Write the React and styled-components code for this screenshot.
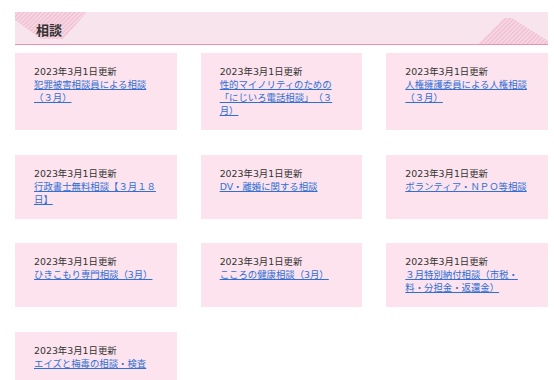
import React from 'react';
import styled, { createGlobalStyle } from 'styled-components';

const items = [
  { date: '2023年3月1日更新', title: '犯罪被害相談員による相談（３月）' },
  { date: '2023年3月1日更新', title: '性的マイノリティのための「にじいろ電話相談」（３月）' },
  { date: '2023年3月1日更新', title: '人権擁護委員による人権相談（３月）' },
  { date: '2023年3月1日更新', title: '行政書士無料相談【３月１８日】' },
  { date: '2023年3月1日更新', title: 'DV・離婚に関する相談' },
  { date: '2023年3月1日更新', title: 'ボランティア・ＮＰＯ等相談' },
  { date: '2023年3月1日更新', title: 'ひきこもり専門相談（3月）' },
  { date: '2023年3月1日更新', title: 'こころの健康相談（3月）' },
  { date: '2023年3月1日更新', title: ['３月特別納付相談（市税・', '料・分担金・返還金）'] },
  { date: '2023年3月1日更新', title: 'エイズと梅毒の相談・検査' },
];

const Hatch = ({ id, points, width, height }) => (
  <svg width={width} height={height} viewBox={`0 0 ${width} ${height}`}>
    <defs>
      <pattern id={id} width="3" height="3" patternUnits="userSpaceOnUse" patternTransform="rotate(45)">
        <rect width="3" height="3" fill="#f5d6e2" />
        <line x1="0" y1="0" x2="0" y2="3" stroke="#eeaec5" strokeWidth="1.4" />
      </pattern>
    </defs>
    <polygon points={points} fill={`url(#${id})`} />
  </svg>
);

const App = () => {
  return (
    <>
      <GlobalStyle />
      <Page>
        <Heading>
          <CornerLeft>
            <Hatch id="hl" width={72} height={28} points="0,0 72,0 48,27 26,27 0,8" />
          </CornerLeft>
          <CornerRight>
            <Hatch id="hr" width={70} height={28} points="0,28 26,2 34,2 70,25 70,28" />
          </CornerRight>
          <Title>相談</Title>
        </Heading>
        <Grid>
          {items.map((item, index) => (
            <Card key={index}>
              <DateText>{item.date}</DateText>
              <Link href="#">
                {Array.isArray(item.title)
                  ? item.title.map((t, i) => (
                      <React.Fragment key={i}>
                        {t}
                        {i < item.title.length - 1 && <br />}
                      </React.Fragment>
                    ))
                  : item.title}
              </Link>
            </Card>
          ))}
        </Grid>
      </Page>
    </>
  );
};

export default App;

const GlobalStyle = createGlobalStyle`
  body {
    margin: 0;
    background: #ffffff;
    font-family: "DejaVu Sans", "Noto Sans CJK JP", sans-serif;
  }
`;

const Page = styled.div`
  width: 533px;
  padding: 12px 0 0 15px;
`;

const Heading = styled.div`
  position: relative;
  height: 32px;
  background: #f7e4ec;
  border-bottom: 1.5px solid #ef8fb1;
  display: flex;
  align-items: center;
  overflow: hidden;
`;

const CornerLeft = styled.div`
  position: absolute;
  left: 0;
  top: 0;
  line-height: 0;
`;

const CornerRight = styled.div`
  position: absolute;
  right: 0;
  bottom: 0;
  line-height: 0;
`;

const Title = styled.h2`
  position: relative;
  margin: 3px 0 0 21px;
  font-family: "Noto Sans CJK JP", sans-serif;
  font-size: 13px;
  font-weight: bold;
  color: #333333;
`;

const Grid = styled.div`
  margin-top: 8px;
  display: grid;
  grid-template-columns: repeat(3, 1fr);
  column-gap: 24px;
  row-gap: 24.5px;
`;

const Card = styled.div`
  background: #fce3ed;
  padding: 12px 20px 13px 19px;
  font-size: 9.4px;
  line-height: 13px;
  text-spacing-trim: space-all;
  line-break: strict;
`;

const DateText = styled.div`
  color: #333333;
`;

const Link = styled.a`
  color: #2f6fd6;
  text-decoration: underline;
`;
